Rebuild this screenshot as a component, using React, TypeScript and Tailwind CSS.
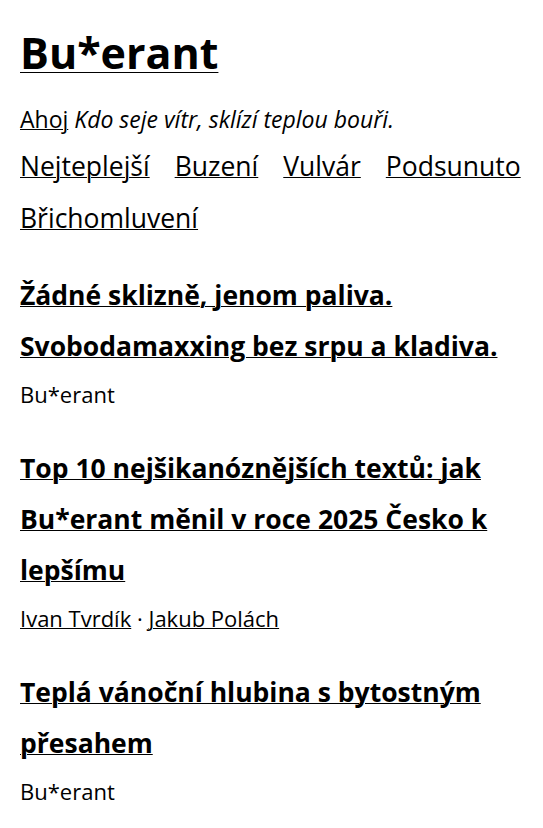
import React from 'react';

const navLinks = ['Nejteplejší', 'Buzení', 'Vulvár', 'Podsunuto', 'Břichomluvení'];

const articles = [
  {
    title: 'Žádné sklizně, jenom paliva. Svobodamaxxing bez srpu a kladiva.',
    authors: [] as string[],
  },
  {
    title: 'Top 10 nejšikanóznějších textů: jak Bu*erant měnil v roce 2025 Česko k lepšímu',
    authors: ['Ivan Tvrdík', 'Jakub Polách'],
  },
  {
    title: 'Teplá vánoční hlubina s bytostným přesahem',
    authors: [] as string[],
  },
];

export default function App() {
  return (
    <div className="min-h-screen bg-white px-5 pt-[25px] text-black font-['Open_Sans',sans-serif]">
      <header>
        <h1 className="text-[43px] font-bold leading-[56px]">
          <a href="#" className="underline decoration-1 underline-offset-[3px]">Bu*erant</a>
        </h1>
        <p className="mt-[23px] text-[23px] leading-[30px]">
          <a href="#" className="underline decoration-1">Ahoj</a> <em>Kdo seje vítr, sklízí teplou bouři.</em>
        </p>
        <nav className="mt-[6px] flex flex-wrap gap-x-[25px] text-[26.5px] leading-[52px]">
          {navLinks.map((link) => (
            <a key={link} href="#" className="underline decoration-1">
              {link}
            </a>
          ))}
        </nav>
      </header>

      <main className="mt-[26px] space-y-[34px]">
        {articles.map((article) => (
          <article key={article.title}>
            <h2 className="text-[26.5px] font-bold leading-[51px]">
              <a href="#" className="underline decoration-1">{article.title}</a>
            </h2>
            <div className="mt-[7px] text-[22px] leading-[30px]">
              {article.authors.length === 0 ? (
                'Bu*erant'
              ) : (
                article.authors.map((author, index) => (
                  <React.Fragment key={author}>
                    {index > 0 && ' · '}
                    <a href="#" className="underline decoration-1">{author}</a>
                  </React.Fragment>
                ))
              )}
            </div>
          </article>
        ))}
      </main>
    </div>
  );
}
